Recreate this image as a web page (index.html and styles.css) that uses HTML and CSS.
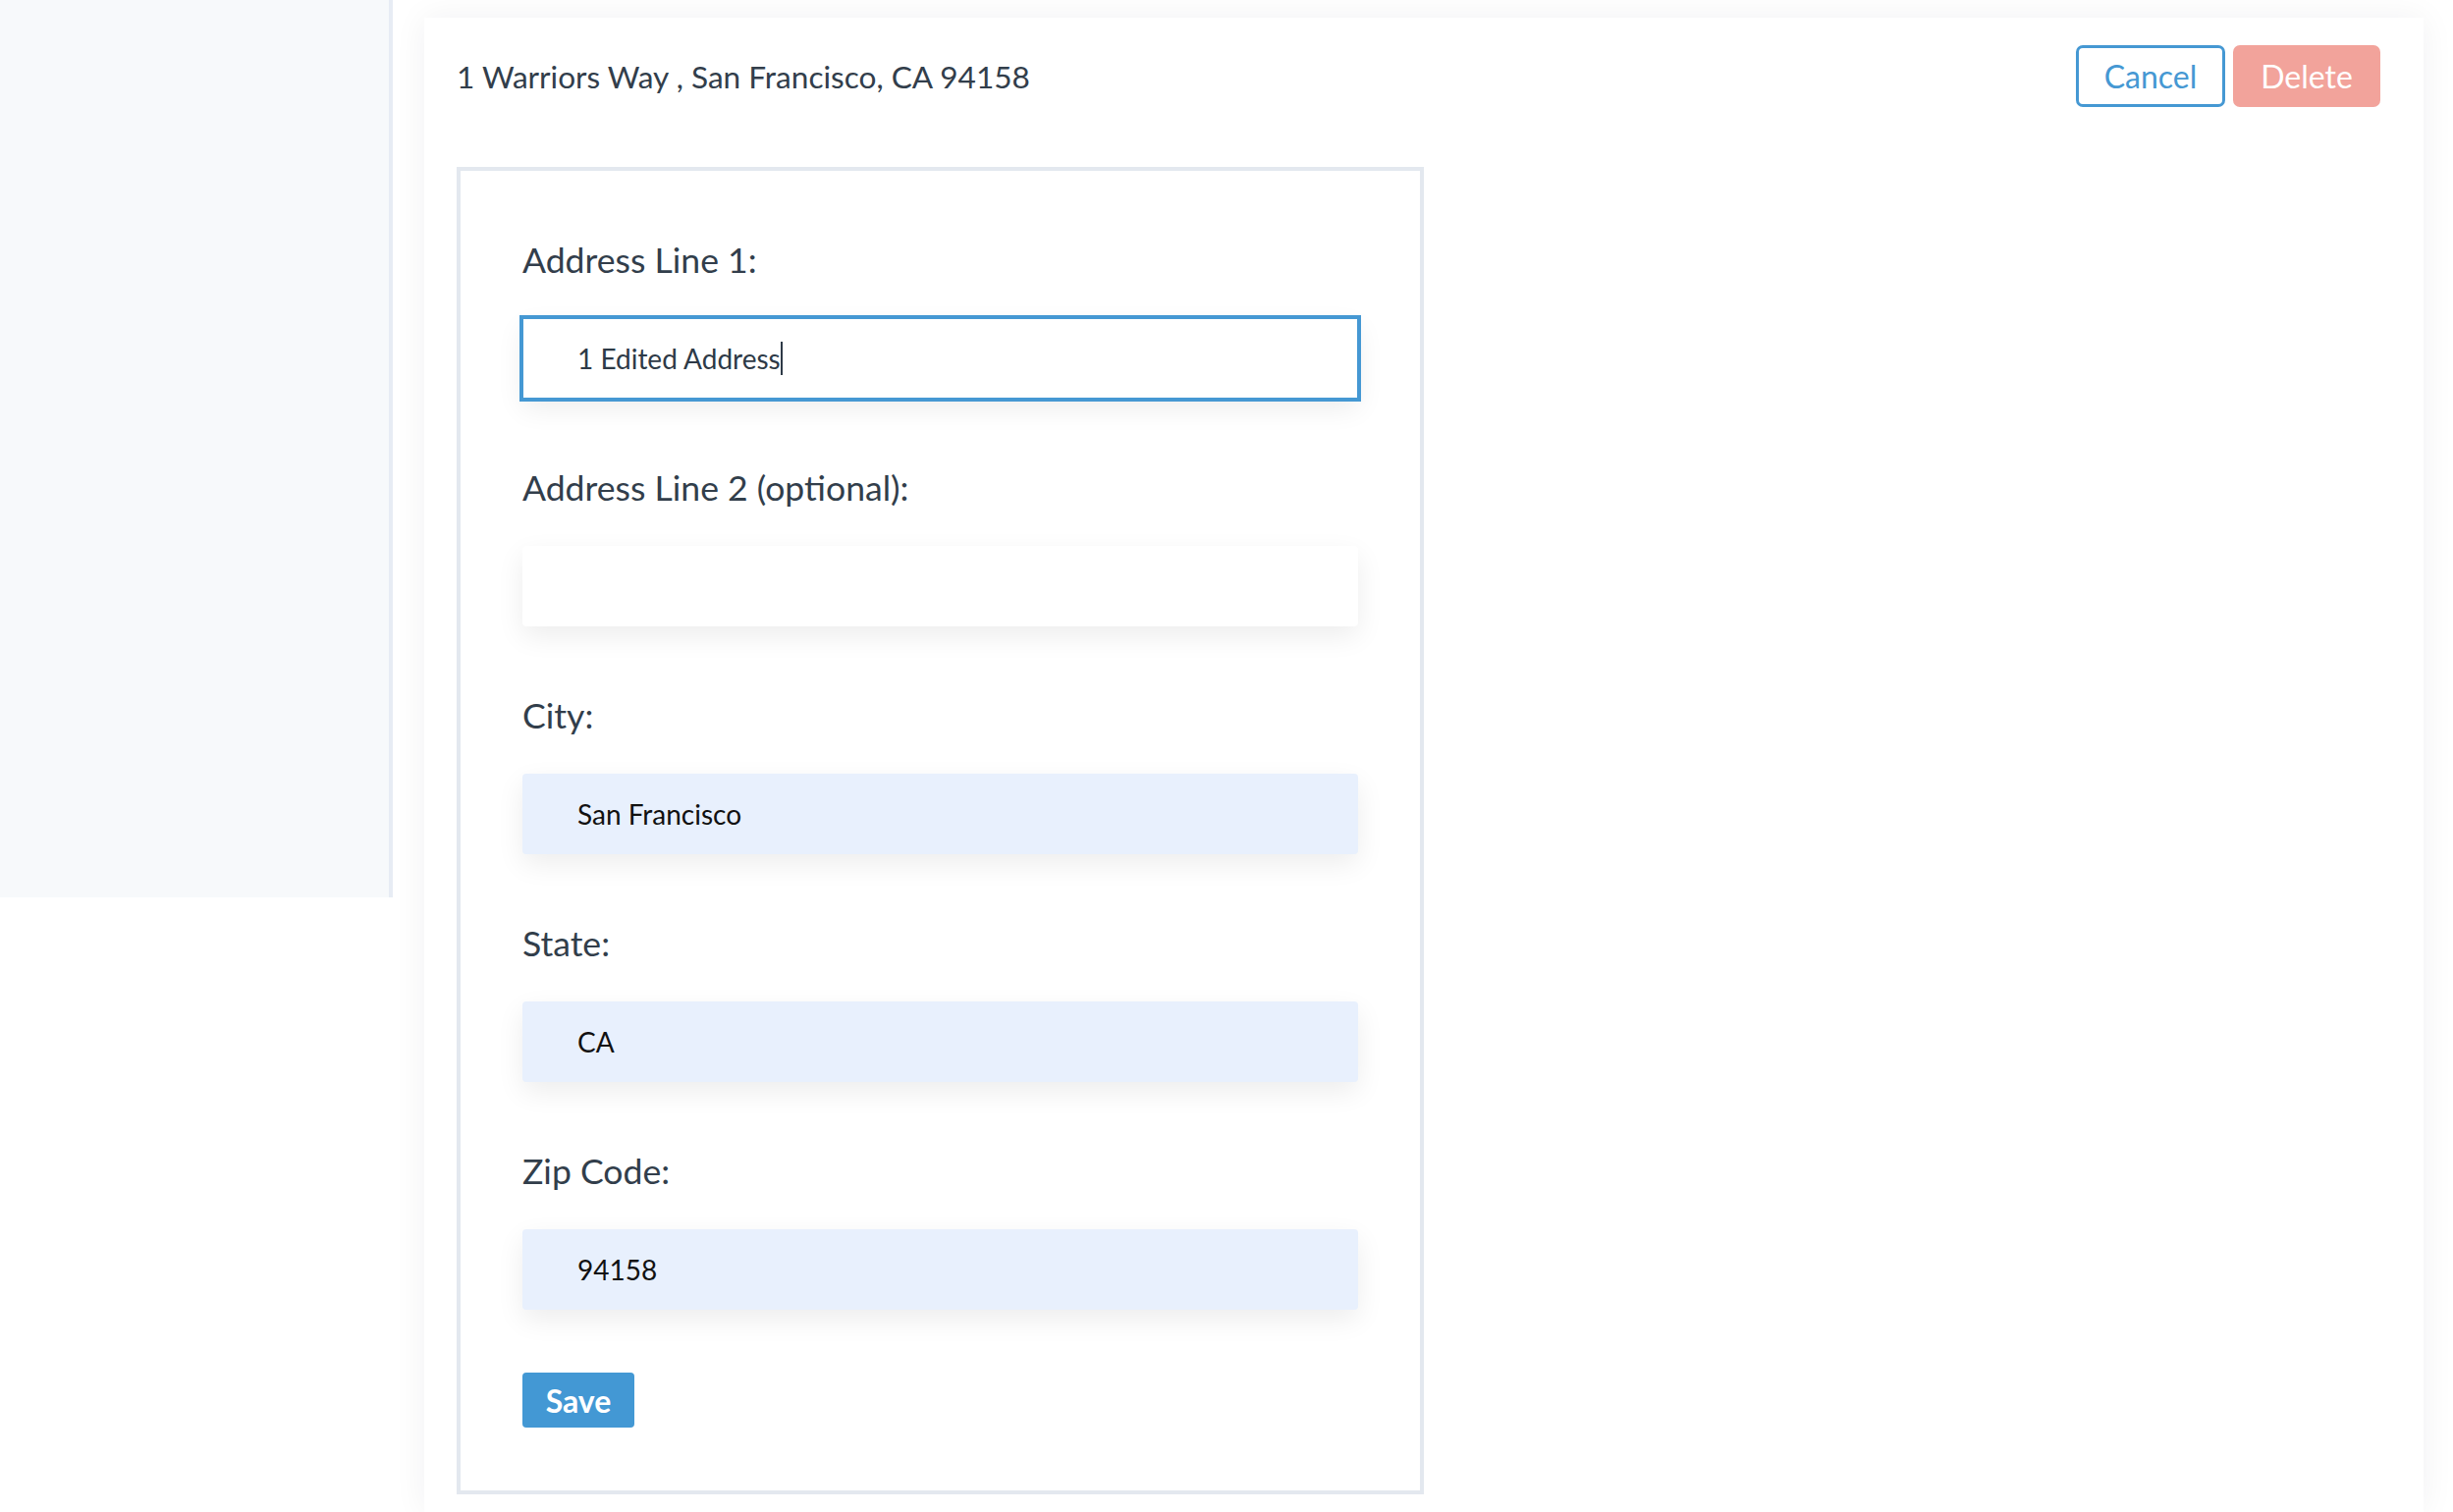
FILE: index.html
```html
<!DOCTYPE html>
<html lang="en">
<head>
<meta charset="utf-8">
<title>Edit Address</title>
<link rel="stylesheet" href="styles.css">
</head>
<body>
<div class="page">
  <aside class="sidebar"></aside>
  <main class="card">
    <div class="header">
      <div class="title">1 Warriors Way , San Francisco, CA 94158</div>
      <div class="actions">
        <button class="btn btn-cancel">Cancel</button>
        <button class="btn btn-delete">Delete</button>
      </div>
    </div>
    <form class="form-box">
      <div class="field">
        <label class="label">Address Line 1:</label>
        <div class="input focused" role="textbox"><span class="value dark">1 Edited Address</span><span class="caret"></span></div>
      </div>
      <div class="field">
        <label class="label">Address Line 2 (optional):</label>
        <div class="input" role="textbox"></div>
      </div>
      <div class="field">
        <label class="label">City:</label>
        <div class="input filled" role="textbox"><span class="value">San Francisco</span></div>
      </div>
      <div class="field">
        <label class="label">State:</label>
        <div class="input filled" role="textbox"><span class="value">CA</span></div>
      </div>
      <div class="field">
        <label class="label">Zip Code:</label>
        <div class="input filled" role="textbox"><span class="value">94158</span></div>
      </div>
      <button type="button" class="btn-save">Save</button>
    </form>
  </main>
</div>
</body>
</html>
```
FILE: styles.css
```css
* { box-sizing: border-box; }
html, body { margin: 0; padding: 0; }
body {
  background: #ffffff;
  font-family: Lato, "Open Sans", sans-serif;
  color: #323e4b;
  width: 2498px;
  height: 1540px;
  overflow: hidden;
}
.page {
  display: flex;
  align-items: flex-start;
}
.sidebar {
  width: 400px;
  height: 914px;
  background: #f7f9fb;
  border-right: 4px solid #e7ecf4;
  flex: none;
}
.card {
  flex: none;
  width: 2036px;
  min-height: 1522px;
  margin-top: 18px;
  margin-left: 32px;
  background: #ffffff;
  box-shadow: 0 0 32px rgba(20, 30, 50, 0.06);
  padding: 28px 44px 0 33px;
}
.header {
  display: flex;
  justify-content: space-between;
  align-items: center;
  height: 63px;
}
.title {
  font-size: 31.6px;
  color: #323e4b;
}
.actions {
  display: flex;
  gap: 8px;
}
.btn {
  font-family: Lato, "Open Sans", sans-serif;
  font-size: 32px;
  height: 63px;
  border-radius: 7px;
  cursor: pointer;
  padding: 0;
}
.btn-cancel {
  width: 152px;
  background: #ffffff;
  border: 3.5px solid #4598d3;
  color: #4598d3;
}
.btn-delete {
  width: 150px;
  background: #f2a39b;
  border: none;
  color: #ffffff;
}
.form-box {
  margin-top: 61px;
  width: 985px;
  border: 4px solid #e3e8ef;
  padding: 69px 63px 64px 63px;
  display: flex;
  flex-direction: column;
  align-items: flex-start;
}
.field {
  width: 851px;
  margin-bottom: 69px;
}
.field:last-of-type {
  margin-bottom: 64px;
}
.label {
  display: block;
  font-size: 35.6px;
  line-height: 43px;
  color: #323e4b;
  margin-bottom: 38px;
}
.input {
  height: 82px;
  width: 851px;
  border-radius: 4px;
  background: #ffffff;
  box-shadow: 0 10px 28px rgba(0, 0, 0, 0.075);
  padding-left: 56px;
  display: flex;
  align-items: center;
  font-size: 28px;
  color: #111111;
}
.input.filled {
  background: #e8f0fd;
}
.input.focused {
  border-radius: 0;
  outline: 4px solid #4598d3;
  outline-offset: -1px;
}
.value.dark {
  color: #2e3a47;
}
.caret {
  display: inline-block;
  width: 2px;
  height: 34px;
  background: #2e3a47;
}
.btn-save {
  width: 114px;
  height: 56px;
  border: none;
  border-radius: 4px;
  background: #4398d4;
  color: #ffffff;
  font-family: Lato, "Open Sans", sans-serif;
  font-weight: 700;
  font-size: 32px;
  padding: 0;
  cursor: pointer;
}
```
